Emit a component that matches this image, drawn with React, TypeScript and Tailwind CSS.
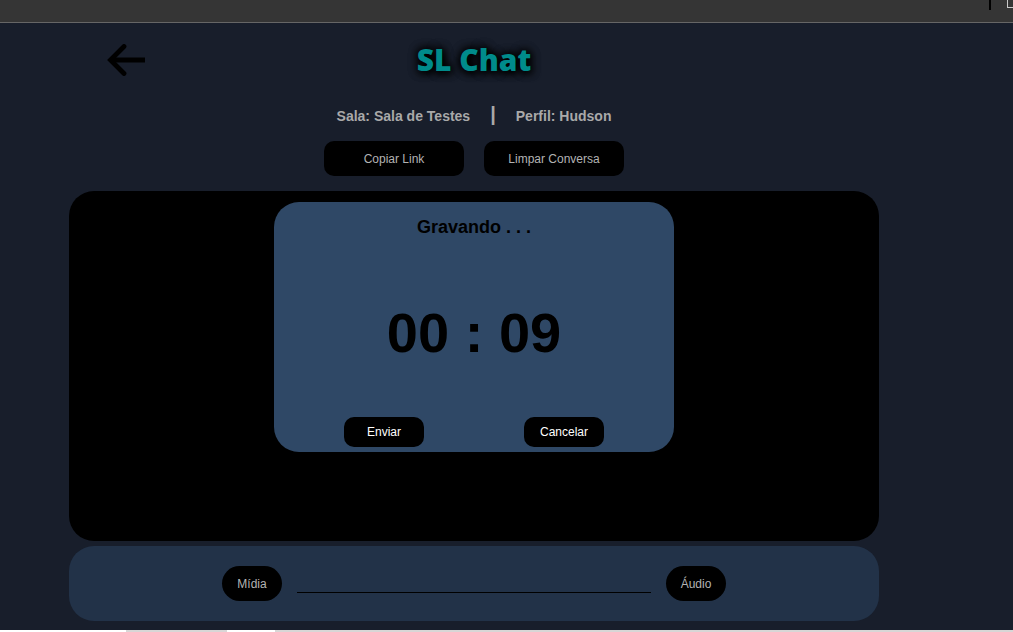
import { useState } from "react";
import type { ReactNode } from "react";

function ActionButton({ children }: { children: ReactNode }) {
  return (
    <button type="button" className="h-[35px] w-[140px] rounded-[10px] bg-black text-xs text-[#b3b3b3]">
      {children}
    </button>
  );
}

function RoundButton({ children }: { children: ReactNode }) {
  return (
    <button type="button" className="h-[35px] w-[60px] shrink-0 rounded-full bg-black text-xs text-[#b3b3b3]">
      {children}
    </button>
  );
}

function RecorderButton({ children }: { children: ReactNode }) {
  return (
    <button type="button" className="h-[30px] w-20 rounded-[10px] bg-black text-xs text-white">
      {children}
    </button>
  );
}

function BrowserBar() {
  return (
    <div className="flex h-[23px] shrink-0 items-start justify-end border-b border-[#666666] bg-[#353535]">
      <span className="h-[10px] w-[2px] bg-black" />
      <span className="ml-4 h-2 w-[6px] border-b border-l border-[#c8c8c8]" />
    </div>
  );
}

function Header() {
  return (
    <header className="grid grid-cols-[1fr_auto_1fr] items-center pt-[17px]">
      <a href="#salas" aria-label="Voltar" className="ml-[38px] justify-self-start">
        <svg width="38" height="32" viewBox="0 0 38 32" fill="none" stroke="#000" strokeWidth="4.8">
          <path d="M3 16H38" />
          <path d="M17 2.5L3.5 16L17 29.5" strokeLinecap="round" strokeLinejoin="miter" />
        </svg>
      </a>
      <h1 className="font-['Gill_Sans','Gill_Sans_MT','Open_Sans',sans-serif] text-[30px] leading-10 font-extrabold text-[#008b8b] [text-shadow:0_0_10px_#000,0_0_10px_#000,2px_2px_8px_#000]">
        SL Chat
      </h1>
    </header>
  );
}

function Recorder() {
  return (
    <section className="flex h-[250px] w-[400px] max-w-full flex-col items-center justify-between rounded-[25px] bg-[#2f4866] pt-[13px] pb-[5px] text-black">
      <h2 className="text-lg leading-6 font-bold">Gravando . . .</h2>
      <p className="pt-[10px] text-[56px] leading-[64px] font-bold">00 : 09</p>
      <div className="flex gap-[100px]">
        <RecorderButton>Enviar</RecorderButton>
        <RecorderButton>Cancelar</RecorderButton>
      </div>
    </section>
  );
}

export default function App() {
  const [message, setMessage] = useState("");

  return (
    <div className="flex min-h-screen flex-col bg-[#181e2b] font-['Liberation_Sans',Arial,sans-serif]">
      <BrowserBar />
      <main className="flex grow flex-col pr-[134px] pb-[9px] pl-[69px]">
        <Header />
        <div className="mt-[22px] flex h-6 items-baseline justify-center gap-5 text-sm font-bold text-[#a9a9a9]">
          <span>Sala: Sala de Testes</span>
          <span className="text-xl leading-6">|</span>
          <span>Perfil: Hudson</span>
        </div>
        <div className="mt-[15px] flex justify-center gap-5">
          <ActionButton>Copiar Link</ActionButton>
          <ActionButton>Limpar Conversa</ActionButton>
        </div>
        <div className="mt-[15px] flex min-h-[350px] grow items-start justify-center rounded-[25px] bg-black pt-[11px]">
          <Recorder />
        </div>
        <form className="mt-[5px] flex h-[75px] items-center justify-center gap-[15px] rounded-[25px] bg-[#223248]">
          <RoundButton>Mídia</RoundButton>
          <input
            type="text"
            aria-label="Mensagem"
            value={message}
            onChange={(event) => setMessage(event.target.value)}
            className="h-[18px] w-[354px] min-w-0 border-b border-black bg-transparent text-sm text-[#a9a9a9] outline-none"
          />
          <RoundButton>Áudio</RoundButton>
        </form>
      </main>
      <div className="flex h-[2px] shrink-0 bg-[#d8d6d6]">
        <span className="w-[126px] bg-white" />
        <span className="ml-[101px] w-12 bg-white" />
      </div>
    </div>
  );
}
